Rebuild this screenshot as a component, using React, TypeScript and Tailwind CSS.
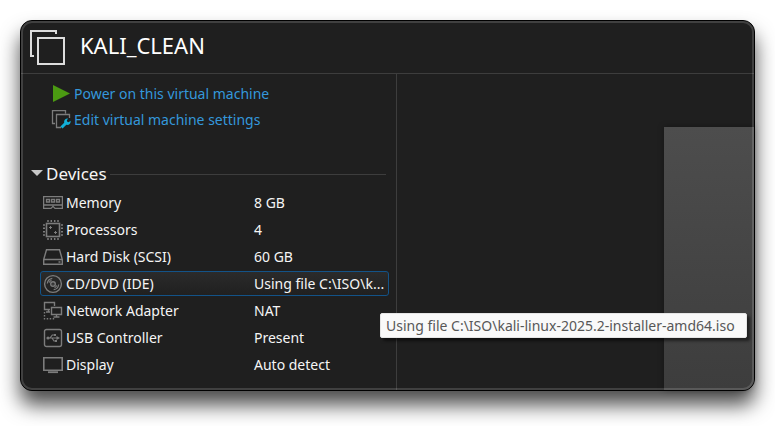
import type { ReactNode } from "react";

type Device = { name: string; value: string; icon: ReactNode; tip?: string };

const stroke = { fill: "none", stroke: "#7c7c7c", strokeWidth: 1 };

const MemoryIcon = () => (
  <svg viewBox="0 0 20 20" className="size-5" aria-hidden="true" {...stroke}>
    <path strokeWidth="1.300" d="M.6 3.600h18.800v11.800h-7.400l-2-2-2 2H.6z M.6 12h18.800" />
    <path strokeWidth="1.300" d="M3.500 6.500h3v2.500h-3z M8.500 6.500h3v2.500h-3z M13.500 6.500h3v2.500h-3z" />
  </svg>
);

const CpuIcon = () => (
  <svg viewBox="0 0 20 20" className="size-5" aria-hidden="true" {...stroke}>
    <rect x="3.500" y="3.500" width="13" height="13" strokeWidth="1.600" />
    <path
      strokeWidth="1.500"
      d="M5 0v2M8.300 0v2M11.700 0v2M15 0v2M5 18v2M8.300 18v2M11.700 18v2M15 18v2M0 5h2M0 8.300h2M0 11.700h2M0 15h2M18 5h2M18 8.300h2M18 11.700h2M18 15h2"
    />
    <path d="M6 7.500h3M7.500 6v3M11 12.500h3M12.500 11v3" />
  </svg>
);

const DiskIcon = () => (
  <svg viewBox="0 0 20 20" className="size-5" aria-hidden="true" {...stroke} strokeWidth="1.400">
    <path d="M.7 12.500L3.500 2.700h13l2.800 9.800v4.800H.700zM.700 12.500h18.600M15.500 15h2" />
  </svg>
);

const DiscIcon = () => (
  <svg viewBox="0 0 20 20" className="size-5" aria-hidden="true" {...stroke} strokeWidth="1.400">
    <circle cx="10" cy="10" r="8.400" />
    <circle cx="10" cy="10" r="2.300" />
    <circle cx="10" cy="10" r=".6" fill="#7c7c7c" stroke="none" />
    <path strokeWidth="1.200" d="M4.300 9.500a6 6 0 0 1 5-5.200M6.300 8.500a4 4 0 0 1 2.200-2.200M15.700 10.500a6 6 0 0 1-5 5.200M13.700 11.500a4 4 0 0 1-2.200 2.200" />
  </svg>
);

const NetworkIcon = () => (
  <svg viewBox="0 0 20 20" className="size-5" aria-hidden="true" {...stroke} strokeWidth="1.400">
    <path d="M7 8.500H1.500v-7h10v3.500M5.500 8.500v2.500M3 11h4" />
    <path d="M8.500 6.500h10v7h-10zM13.500 13.500v2.500M10.500 16h6" />
    <path strokeDasharray="1.500 1.500" d="M1.500 11v6.800h11" />
  </svg>
);

const UsbIcon = () => (
  <svg viewBox="0 0 20 20" className="size-5" aria-hidden="true" {...stroke} strokeWidth="1.400">
    <rect x="1.500" y="1.500" width="17" height="17" rx="2" />
    <path strokeWidth="1.200" d="M5 10h9M7 10l2.300-3h2M9 10l2 3h1.500" />
    <path fill="#7c7c7c" stroke="none" d="M13.500 8l3.500 2-3.500 2zM11 6h2v2h-2zM12 12h2v2h-2z" />
    <circle cx="5" cy="10" r="1.600" fill="#7c7c7c" stroke="none" />
  </svg>
);

const DisplayIcon = () => (
  <svg viewBox="0 0 20 20" className="size-5" aria-hidden="true" {...stroke}>
    <path strokeWidth="1.600" d="M.8 2.800h18.400v12.400H.8z" />
    <path strokeWidth="1.800" d="M5 17.200h10" />
  </svg>
);

const devices: Device[] = [
  { name: "Memory", value: "8 GB", icon: <MemoryIcon /> },
  { name: "Processors", value: "4", icon: <CpuIcon /> },
  { name: "Hard Disk (SCSI)", value: "60 GB", icon: <DiskIcon /> },
  {
    name: "CD/DVD (IDE)",
    value: "Using file C:\\ISO\\k...",
    icon: <DiscIcon />,
    tip: "Using file C:\\ISO\\kali-linux-2025.2-installer-amd64.iso",
  },
  { name: "Network Adapter", value: "NAT", icon: <NetworkIcon /> },
  { name: "USB Controller", value: "Present", icon: <UsbIcon /> },
  { name: "Display", value: "Auto detect", icon: <DisplayIcon /> },
];

function DeviceRow({ name, value, icon, tip }: Device) {
  return (
    <li className="relative flex h-[27px] items-center">
      <button
        type="button"
        aria-describedby={tip ? "device-tip" : undefined}
        className={
          "flex h-[25px] w-full items-center rounded-[3px] border pl-0.5 text-left " +
          (tip ? "border-[#135388] bg-linear-to-b from-[#2b2b2b] to-[#202020]" : "border-transparent")
        }
      >
        {icon}
        <span className="ml-[3px] w-[188px] whitespace-nowrap">{name}</span>
        <span className="whitespace-nowrap">{value}</span>
      </button>
      {tip && (
        <div
          id="device-tip"
          role="tooltip"
          className="absolute top-[43px] left-[340px] z-10 flex h-[25px] min-w-[367px] items-center rounded-[2px] border border-[#e5e5e5] bg-[#f9f9f9] px-[5px] whitespace-nowrap text-[#575757] shadow-[3px_3px_3px_rgba(0,0,0,0.5)]"
        >
          {tip}
        </div>
      )}
    </li>
  );
}

export default function App() {
  return (
    <div className="min-h-screen bg-white px-5 pt-5 pb-[35px] font-['Noto_Sans','Open_Sans',sans-serif] text-[14px] leading-5 text-[#f5f5f5]">
      <main className="relative rounded-xl border border-black bg-[#1f1f1f] shadow-[0_14px_20px_rgba(0,0,0,0.7)]">
        <header className="flex h-[53px] items-start border-b border-[#3d3d3d] pt-2 pl-2">
          <svg viewBox="0 0 36 36" className="size-9" fill="none" stroke="#dcdcdc" strokeWidth="2" aria-hidden="true">
            <path d="M27 5V2H2v25h3" />
            <path d="M9 9h26v26H9z" />
          </svg>
          <h1 className="ml-[15px] text-[22px] leading-8 text-white">KALI_CLEAN</h1>
        </header>

        <div className="flex">
          <section className="w-[376px] shrink-0 border-r border-[#3d3d3d] pt-[7px] pr-[7px] pb-3 pl-[19px]">
            <div className="flex flex-col text-[#3498db]">
              <button type="button" className="flex h-[26px] items-center gap-[3px] pl-[11px] text-left">
                <svg viewBox="0 0 20 20" className="size-5" aria-hidden="true">
                  <path d="M2 1l17 8.500L2 18z" fill="#4b9a12" />
                </svg>
                Power on this virtual machine
              </button>
              <button type="button" className="flex h-[26px] items-center gap-[3px] pl-[11px] text-left">
                <svg viewBox="0 0 20 20" className="size-5" fill="none" aria-hidden="true">
                  <path d="M14.500 3.500v-3h-13v13H4M10 17.500H5.500v-13h13V8" stroke="#7c7c7c" strokeWidth="1.300" />
                  <path d="M10.500 17.500l5-5" stroke="#12b0d8" strokeWidth="3" />
                  <path
                    d="M17 8.500l-1.200 2 .5 1.300 1.400.4 1.800-1.400c.6 2.600-1.400 4.600-3.900 4l-2.400-2.200c-.5-2.500 1.400-4.600 3.800-4.100z"
                    fill="#12b0d8"
                  />
                </svg>
                Edit virtual machine settings
              </button>
            </div>

            <h2 className="mt-[29px] flex h-6 items-center text-[17px] leading-6">
              <button type="button" aria-expanded="true" className="-ml-[9px] flex items-center gap-[3px]">
                <svg viewBox="0 0 12 12" className="size-3" aria-hidden="true">
                  <path d="M0 2h12L6 8z" fill="#c8c8c8" />
                </svg>
                Devices
              </button>
              <span className="mr-[3px] ml-[3px] h-px flex-1 bg-[#3d3d3d]" />
            </h2>

            <ul className="mt-[3px]">
              {devices.map((d) => (
                <DeviceRow key={d.name} {...d} />
              ))}
            </ul>
          </section>

          <div className="flex flex-1 pt-[53px] pl-[267px]">
            <div className="flex-1 rounded-br-[11px] bg-linear-to-b from-[#4d4d4d] to-[#3d3d3d] shadow-[0_0_6px_rgba(0,0,0,0.35)]" />
          </div>
        </div>

        <div className="pointer-events-none absolute inset-0 rounded-[11px] border-2 border-white/15" />
      </main>
    </div>
  );
}
